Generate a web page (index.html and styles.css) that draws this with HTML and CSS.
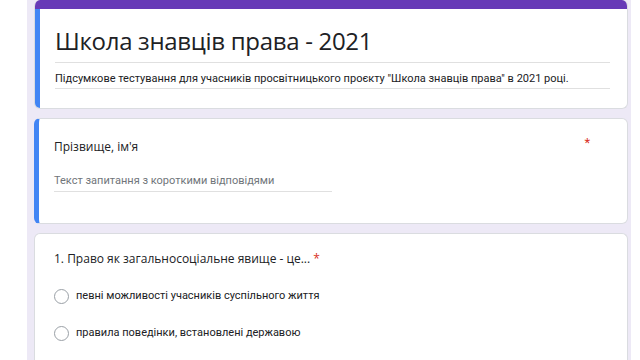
FILE: index.html
```html
<!DOCTYPE html>
<html lang="uk">
<head>
<meta charset="utf-8">
<link rel="stylesheet" href="styles.css">
</head>
<body>
<div class="page">
  <div class="card card-head">
    <div class="card-top"></div>
    <div class="card-body accent">
      <div class="form-title">Школа знавців права - 2021</div>
      <div class="form-desc">Підсумкове тестування для учасників просвітницького проєкту "Школа знавців права" в 2021 році.</div>
    </div>
  </div>

  <div class="card accent card-q1">
    <div class="q-row">
      <div class="q-title">Прізвище, ім'я</div>
      <span class="req">*</span>
    </div>
    <div class="short-answer">Текст запитання з короткими відповідями</div>
  </div>

  <div class="card card-q2">
    <div class="q-title">1. Право як загальносоціальне явище - це... <span class="req-inline">*</span></div>
    <div class="options">
      <label class="option"><span class="radio"></span><span class="opt-text">певні можливості учасників суспільного життя</span></label>
      <label class="option"><span class="radio"></span><span class="opt-text">правила поведінки, встановлені державою</span></label>
    </div>
  </div>
</div>
</body>
</html>
```

FILE: styles.css
```css
html, body {
  margin: 0;
  padding: 0;
  background: #ffffff;
}

body {
  font-family: Roboto, "Noto Sans", sans-serif;
  color: #202124;
  width: 640px;
  height: 360px;
  overflow: hidden;
}

.page {
  margin-left: 27px;
  width: 594px;
  height: 360px;
  padding: 0 3px 0 7px;
  background: #ede9f6;
  display: flex;
  flex-direction: column;
  gap: 9px;
  overflow: hidden;
}

.card {
  background: #ffffff;
  border: 1px solid #dadce0;
  border-radius: 6px;
  overflow: hidden;
  flex-shrink: 0;
}

.accent {
  border-left: 5px solid #4285f4;
}

.card-head {
  border-top: none;
}

.card-top {
  height: 9px;
  background: #673ab7;
}

.card-head .card-body {
  padding: 17px 17px 19px 15px;
}

.form-title {
  font-family: "Open Sans", Roboto, sans-serif;
  font-size: 24px;
  line-height: 30px;
  color: #202124;
  padding-bottom: 6px;
  border-bottom: 1px solid #e0e0e0;
  letter-spacing: -0.3px;
}

.form-desc {
  margin-top: 9px;
  font-size: 11px;
  line-height: 14px;
  padding-bottom: 2px;
  border-bottom: 1px solid #e0e0e0;
  color: #202124;
}

.card-q1 {
  box-sizing: border-box;
  height: 106px;
  padding: 20px 17px 0 15px;
}

.q-row {
  display: flex;
  justify-content: space-between;
  align-items: flex-start;
}

.q-title {
  font-family: "Open Sans", Roboto, sans-serif;
  font-size: 12px;
  line-height: 16px;
  color: #202124;
}

.req {
  color: #d93025;
  font-size: 13px;
  line-height: 12px;
  margin-right: 20px;
  margin-top: -2px;
}

.req-inline {
  color: #d93025;
}

.short-answer {
  margin-top: 19px;
  width: 278px;
  font-size: 11px;
  line-height: 14px;
  color: #70757a;
  padding-bottom: 3px;
  border-bottom: 1px solid #e0e0e0;
}

.card-q2 {
  padding: 17px 17px 20px 19px;
  flex: 1 0 auto;
  border-bottom: none;
  border-radius: 6px 6px 0 0;
}

.options {
  margin-top: 21px;
  display: flex;
  flex-direction: column;
  gap: 21px;
}

.option {
  display: flex;
  align-items: center;
  gap: 7px;
}

.radio {
  width: 13px;
  height: 13px;
  border: 1.5px solid #9aa0a6;
  border-radius: 50%;
  flex-shrink: 0;
}

.opt-text {
  font-size: 11px;
  line-height: 16px;
  color: #202124;
}
```
